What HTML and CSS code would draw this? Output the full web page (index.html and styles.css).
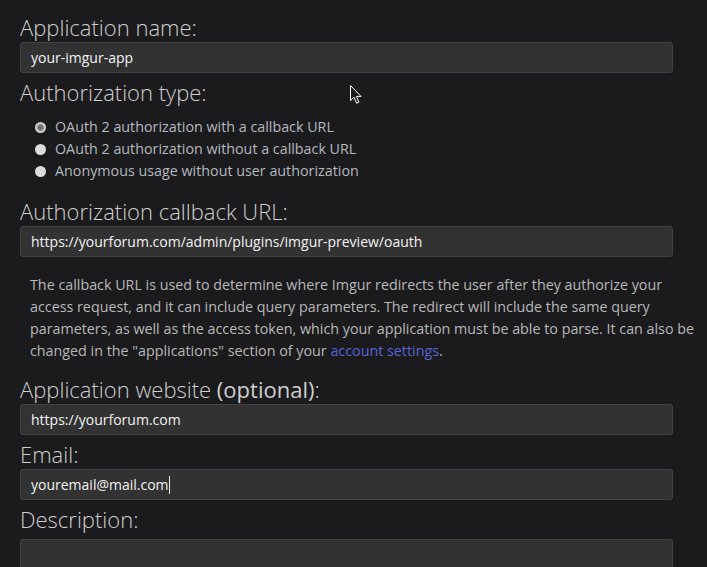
FILE: index.html
```html
<!DOCTYPE html>
<html>
<head>
<meta charset="utf-8">
<link rel="stylesheet" href="styles.css">
</head>
<body>
<form class="form">
  <label class="heading">Application name:</label>
  <div class="field">your-imgur-app</div>

  <label class="heading">Authorization type:</label>
  <ul class="radios">
    <li><span class="radio checked"></span>OAuth 2 authorization with a callback URL</li>
    <li><span class="radio"></span>OAuth 2 authorization without a callback URL</li>
    <li><span class="radio"></span>Anonymous usage without user authorization</li>
  </ul>

  <label class="heading heading-gap">Authorization callback URL:</label>
  <div class="field">https://yourforum.com/admin/plugins/imgur-preview/oauth</div>

  <p class="help">The callback URL is used to determine where Imgur redirects the user after they authorize your access request, and it can include query parameters. The redirect will include the same query parameters, as well as the access token, which your application must be able to parse. It can also be changed in the "applications" section of your <a class="link" href="#">account settings</a>.</p>

  <label class="heading">Application website <b class="opt">(optional)</b>:</label>
  <div class="field">https://yourforum.com</div>

  <label class="heading">Email:</label>
  <div class="field">youremail@mail.com<span class="caret"></span></div>

  <label class="heading">Description:</label>
  <div class="field area"></div>
</form>
<svg class="pointer" width="13" height="20" viewBox="0 0 13 20"><path d="M0.5 0.5 L0.5 15.5 L4 12.2 L6.6 18.2 L8.9 17.2 L6.4 11.4 L11 11.4 Z" fill="#1b1b1d" stroke="#fff" stroke-width="1"/></svg>
</body>
</html>
```
FILE: styles.css
```css
html, body {
  margin: 0;
  padding: 0;
  background: #1b1b1d;
}
body {
  position: relative;
  font-family: "Open Sans", "DejaVu Sans", sans-serif;
  color: #bcbcbc;
  height: 567px;
  overflow: hidden;
}
.form {
  display: flex;
  flex-direction: column;
  padding: 14px 0 0 20px;
}
.heading {
  display: block;
  font-weight: 300;
  font-size: 22px;
  line-height: 26px;
  color: #cfcfcf;
  margin: 0 0 2px;
}
.heading-gap {
  margin-top: 16px;
}
.opt {
  font-weight: 400;
}
.field {
  box-sizing: border-box;
  width: 653px;
  height: 31px;
  background: #323232;
  border: 1px solid #424242;
  border-radius: 3px;
  padding: 0 10px;
  font-size: 14px;
  line-height: 29px;
  color: #f2f2f2;
  margin-bottom: 6px;
  display: flex;
  align-items: center;
}
.field.area {
  height: 60px;
  margin-top: 5px;
}
.caret {
  display: inline-block;
  width: 1px;
  height: 18px;
  background: #f2f2f2;
}
.radios {
  list-style: none;
  margin: 9px 0 0;
  padding: 0 0 0 15px;
  font-size: 14.3px;
  line-height: 22px;
  color: #b4b9bf;
}
.radios li {
  display: flex;
  align-items: center;
}
.radio {
  width: 11px;
  height: 11px;
  border-radius: 50%;
  background: #dcdcdc;
  margin-right: 9px;
  flex: none;
}
.radio.checked {
  background: radial-gradient(circle, #6e6e6e 0, #6e6e6e 2.5px, #bdbdbd 3.5px, #d6d6d6 5.5px);
}
.help {
  margin: 11px 0 14px;
  padding: 0 0 0 10px;
  font-size: 14.3px;
  line-height: 22px;
  color: #b8b8b8;
  width: 672px;
}
.link {
  color: #5a63d6;
  text-decoration: none;
}
.pointer {
  position: absolute;
  left: 350px;
  top: 85px;
}
```
